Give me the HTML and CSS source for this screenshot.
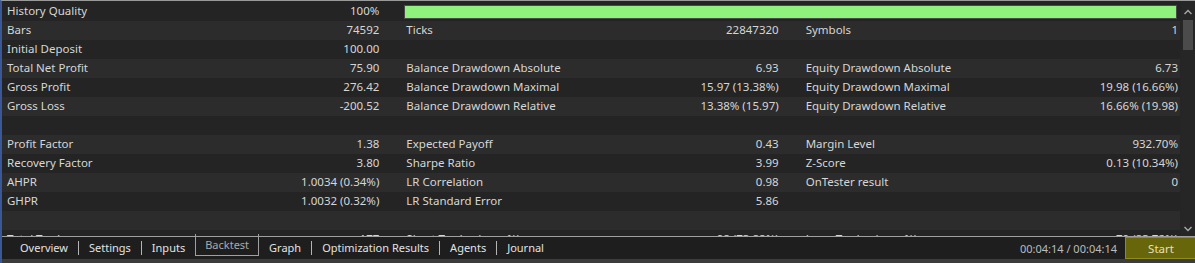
FILE: index.html
```
<!DOCTYPE html>
<html lang="en">
<head>
  <meta charset="UTF-8">
  <title>Strategy Tester - Backtest</title>
  <link rel="stylesheet" href="styles.css">
</head>
<body>
  <div class="tester">
    <div class="content">
      <div class="stats">
        <div class="row">
          <div class="cell"><span>History Quality</span><span>100%</span></div>
          <div class="cell wide"><div class="quality"></div></div>
        </div>
        <div class="row">
          <div class="cell"><span>Bars</span><span>74592</span></div>
          <div class="cell"><span>Ticks</span><span>22847320</span></div>
          <div class="cell"><span>Symbols</span><span>1</span></div>
        </div>
        <div class="row">
          <div class="cell"><span>Initial Deposit</span><span>100.00</span></div>
          <div class="cell"></div>
          <div class="cell"></div>
        </div>
        <div class="row">
          <div class="cell"><span>Total Net Profit</span><span>75.90</span></div>
          <div class="cell"><span>Balance Drawdown Absolute</span><span>6.93</span></div>
          <div class="cell"><span>Equity Drawdown Absolute</span><span>6.73</span></div>
        </div>
        <div class="row">
          <div class="cell"><span>Gross Profit</span><span>276.42</span></div>
          <div class="cell"><span>Balance Drawdown Maximal</span><span>15.97 (13.38%)</span></div>
          <div class="cell"><span>Equity Drawdown Maximal</span><span>19.98 (16.66%)</span></div>
        </div>
        <div class="row">
          <div class="cell"><span>Gross Loss</span><span>-200.52</span></div>
          <div class="cell"><span>Balance Drawdown Relative</span><span>13.38% (15.97)</span></div>
          <div class="cell"><span>Equity Drawdown Relative</span><span>16.66% (19.98)</span></div>
        </div>
        <div class="row"></div>
        <div class="row">
          <div class="cell"><span>Profit Factor</span><span>1.38</span></div>
          <div class="cell"><span>Expected Payoff</span><span>0.43</span></div>
          <div class="cell"><span>Margin Level</span><span>932.70%</span></div>
        </div>
        <div class="row">
          <div class="cell"><span>Recovery Factor</span><span>3.80</span></div>
          <div class="cell"><span>Sharpe Ratio</span><span>3.99</span></div>
          <div class="cell"><span>Z-Score</span><span>0.13 (10.34%)</span></div>
        </div>
        <div class="row">
          <div class="cell"><span>AHPR</span><span>1.0034 (0.34%)</span></div>
          <div class="cell"><span>LR Correlation</span><span>0.98</span></div>
          <div class="cell"><span>OnTester result</span><span>0</span></div>
        </div>
        <div class="row">
          <div class="cell"><span>GHPR</span><span>1.0032 (0.32%)</span></div>
          <div class="cell"><span>LR Standard Error</span><span>5.86</span></div>
          <div class="cell"></div>
        </div>
        <div class="row"></div>
        <div class="row">
          <div class="cell"><span>Total Trades</span><span>177</span></div>
          <div class="cell"><span>Short Trades (won %)</span><span>98 (73.88%)</span></div>
          <div class="cell"><span>Long Trades (won %)</span><span>79 (83.72%)</span></div>
        </div>
      </div>
      <div class="scrollbar">
        <svg class="arrow" width="14" height="14" viewBox="0 0 14 14"><path d="M3.5 9 L7 5.5 L10.5 9" fill="none" stroke="#a8a8a8" stroke-width="1.4"/></svg>
        <div class="thumb"></div>
        <div class="track"></div>
        <svg class="arrow" width="14" height="14" viewBox="0 0 14 14"><path d="M3.5 5 L7 8.5 L10.5 5" fill="none" stroke="#a8a8a8" stroke-width="1.4"/></svg>
      </div>
    </div>
    <div class="tabbar">
      <div class="tabs">
        <span class="tab">Overview</span><i class="sep"></i>
        <span class="tab">Settings</span><i class="sep"></i>
        <span class="tab">Inputs</span>
        <span class="tab active">Backtest</span>
        <span class="tab">Graph</span><i class="sep"></i>
        <span class="tab">Optimization Results</span><i class="sep"></i>
        <span class="tab">Agents</span><i class="sep"></i>
        <span class="tab">Journal</span>
      </div>
      <span class="elapsed">00:04:14 / 00:04:14</span>
      <button class="start">Start</button>
    </div>
    <div class="bottom"></div>
  </div>
</body>
</html>
```
FILE: styles.css
```
html, body { margin: 0; height: 100%; }
body {
  background: #252525; color: #d6d6d6; overflow: hidden;
  font-family: "Noto Sans", "Open Sans", sans-serif; font-size: 11.5px;
}
.tester { height: 263px; display: flex; flex-direction: column; border-left: 2px solid #3b5896; border-top: 1px solid #9a9a9a; box-sizing: border-box; }

.content { height: 235px; display: flex; overflow: hidden; }
.stats { flex: 1; padding-top: 1px; overflow: hidden; }
.row { display: grid; grid-template-columns: 1fr 1fr 1fr; column-gap: 20px; height: 19px; line-height: 18px; background: #242424; }
.row:nth-child(even) { background: #2c2c2c; }
.cell { display: flex; justify-content: space-between; padding: 0 2px 0 5px; white-space: nowrap; }
.cell.wide { grid-column: span 2; padding: 0 3px 0 3px; }
.quality { flex: 1; height: 12px; margin-top: 3px; background: #8ff27c; border: 1px solid #4a4a4a; }

.scrollbar { width: 14px; margin-left: 1px; background: #262626; display: flex; flex-direction: column; }
.arrow { display: block; margin-top: 4px; }
.thumb { height: 30px; margin: 1px 2px 0; background: #4b4b4b; }
.track { flex: 1; }

.tabbar { height: 22px; display: flex; align-items: center; background: #1e1e1e; border-top: 1px solid #a0a0a0; padding-left: 8px; font-size: 11px; }
.tabs { display: flex; align-items: center; height: 100%; flex: 1; }
.tab { padding: 0 10px; color: #e2e2e2; line-height: 20px; }
.tab.active { color: #a9a9a9; border: 1px solid #a0a0a0; border-top: none; margin-top: -3px; padding: 1px 9px 0; align-self: flex-start; }
.sep { width: 1px; height: 14px; background: #b4b4b4; }
.elapsed { color: #bcbcbc; margin-right: 8px; }
.start {
  width: 72px; height: 22px; margin-right: -2px; border: 1px solid #8f8d1c; background: #68660b;
  color: #e4e2b8; font: inherit; font-size: 11.5px; padding: 0;
}
.bottom { height: 4px; background: #3c3c3c; }
```
